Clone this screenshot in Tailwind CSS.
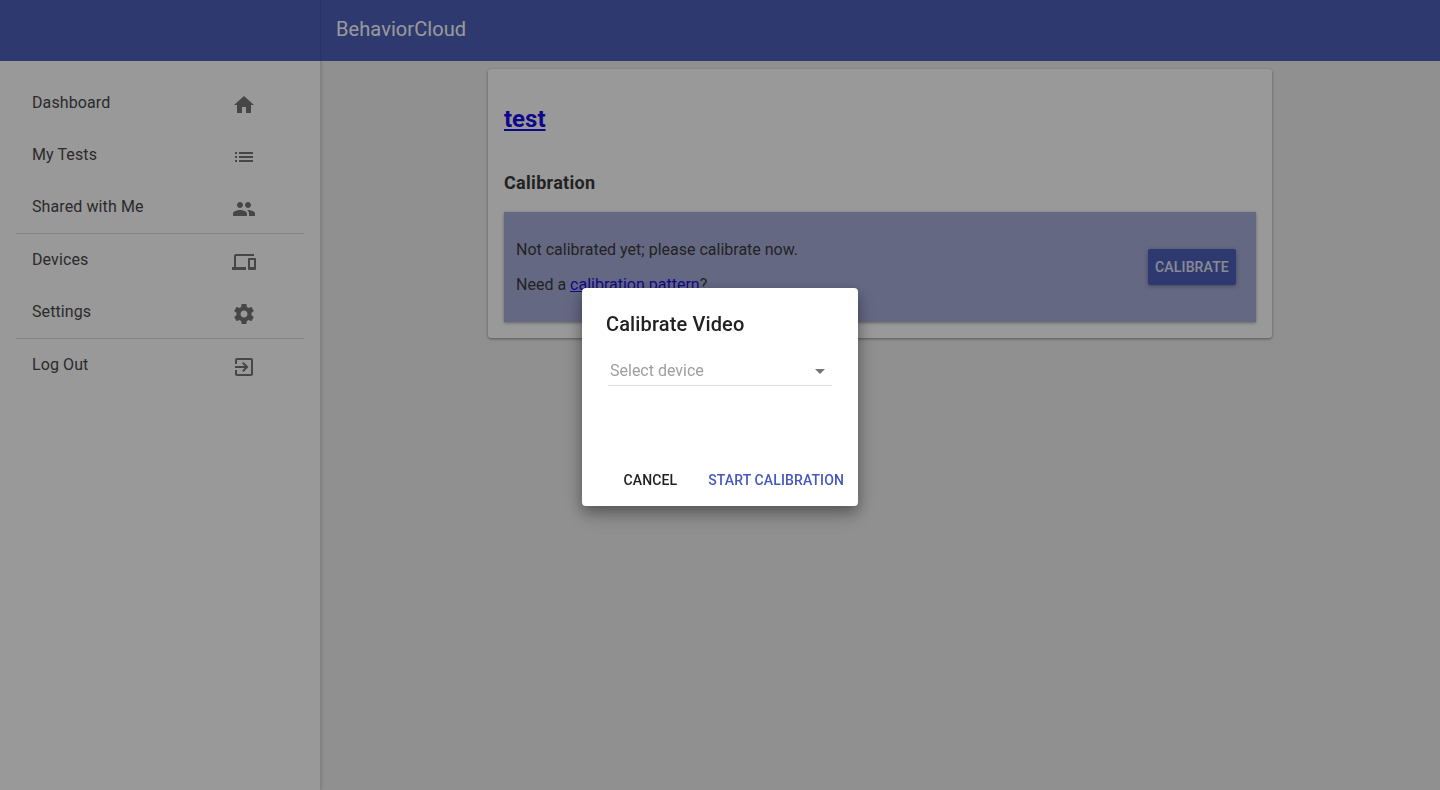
<!DOCTYPE html>
<html lang="en">
<head>
  <meta charset="UTF-8">
  <title>BehaviorCloud</title>
  <script src="https://cdn.jsdelivr.net/npm/@tailwindcss/browser@4"></script>
</head>
<body class="bg-[#f0f0f0] font-['Roboto',sans-serif] text-[#3a3a3a] overflow-hidden">
  <div class="h-[790px] flex flex-col">
    <!-- app bar -->
    <header class="h-[61px] shrink-0 bg-[#4d5fbb] flex relative z-10">
      <div class="w-[321px] border-r border-black/10"></div>
      <div class="pl-[15px] pb-1 flex items-center text-[20px] tracking-[0.08px] text-white">BehaviorCloud</div>
    </header>

    <div class="flex flex-1 min-h-0">
      <!-- sidebar -->
      <aside class="w-[321px] shrink-0 bg-white border-r border-black/15 shadow-[1px_0_3px_rgba(0,0,0,0.12)] pt-4 px-4 text-[16px] tracking-[0.1px] text-[#484848]">
        <a class="mt-1 h-12 pl-4 pr-[48px] flex items-center justify-between">
          <span class="-mt-[5px]">Dashboard</span>
          <svg class="w-6 h-6 fill-[#757575]" viewBox="0 0 24 24"><path d="M10 20v-6h4v6h5v-8h3L12 3 2 12h3v8z"/></svg>
        </a>
        <a class="mt-1 h-12 pl-4 pr-[48px] flex items-center justify-between">
          <span class="-mt-[5px]">My Tests</span>
          <svg class="w-6 h-6 fill-[#757575]" viewBox="0 0 24 24"><path d="M3 13h2v-2H3v2zm0 4h2v-2H3v2zm0-8h2V7H3v2zm4 4h14v-2H7v2zm0 4h14v-2H7v2zM7 7v2h14V7H7z"/></svg>
        </a>
        <a class="mt-1 h-12 pl-4 pr-[48px] flex items-center justify-between">
          <span class="-mt-[5px]">Shared with Me</span>
          <svg class="w-6 h-6 fill-[#757575]" viewBox="0 0 24 24"><path d="M16 11c1.66 0 2.99-1.34 2.99-3S17.66 5 16 5c-1.66 0-3 1.34-3 3s1.34 3 3 3zm-8 0c1.66 0 2.99-1.34 2.99-3S9.66 5 8 5C6.34 5 5 6.34 5 8s1.34 3 3 3zm0 2c-2.33 0-7 1.17-7 3.5V19h14v-2.5c0-2.33-4.67-3.5-7-3.5zm8 0c-.29 0-.62.02-.97.05 1.16.84 1.97 1.97 1.97 3.45V19h6v-2.5c0-2.33-4.67-3.5-7-3.5z"/></svg>
        </a>
        <div class="h-px bg-[#dedede]"></div>
        <a class="mt-1 h-12 pl-4 pr-[48px] flex items-center justify-between">
          <span class="-mt-[5px]">Devices</span>
          <svg class="w-6 h-6 fill-[#757575]" viewBox="0 0 24 24"><path d="M4 6h18V4H4c-1.1 0-2 .9-2 2v11H0v3h14v-3H4V6zm19 2h-6c-.55 0-1 .45-1 1v10c0 .55.45 1 1 1h6c.55 0 1-.45 1-1V9c0-.55-.45-1-1-1zm-1 9h-4v-7h4v7z"/></svg>
        </a>
        <a class="mt-1 h-12 pl-4 pr-[48px] flex items-center justify-between">
          <span class="-mt-[5px]">Settings</span>
          <svg class="w-6 h-6 fill-[#757575]" viewBox="0 0 24 24"><path d="M19.43 12.98c.04-.32.07-.64.07-.98s-.03-.66-.07-.98l2.11-1.65c.19-.15.24-.42.12-.64l-2-3.46c-.12-.22-.39-.3-.61-.22l-2.49 1c-.52-.4-1.08-.73-1.69-.98l-.38-2.65C14.46 2.18 14.25 2 14 2h-4c-.25 0-.46.18-.49.42l-.38 2.65c-.61.25-1.17.59-1.69.98l-2.49-1c-.23-.09-.49 0-.61.22l-2 3.46c-.13.22-.07.49.12.64l2.11 1.65c-.04.32-.07.65-.07.98s.03.66.07.98l-2.11 1.65c-.19.15-.24.42-.12.64l2 3.46c.12.22.39.3.61.22l2.49-1c.52.4 1.08.73 1.69.98l.38 2.65c.03.24.24.42.49.42h4c.25 0 .46-.18.49-.42l.38-2.65c.61-.25 1.17-.59 1.69-.98l2.49 1c.23.09.49 0 .61-.22l2-3.46c.12-.22.07-.49-.12-.64l-2.11-1.65zM12 15.5c-1.93 0-3.5-1.57-3.5-3.5s1.57-3.5 3.5-3.5 3.5 1.57 3.5 3.5-1.57 3.5-3.5 3.5z"/></svg>
        </a>
        <div class="h-px bg-[#dedede]"></div>
        <a class="mt-1 h-12 pl-4 pr-[48px] flex items-center justify-between">
          <span class="-mt-[5px]">Log Out</span>
          <svg class="w-6 h-6 fill-[#757575]" viewBox="0 0 24 24"><path d="M10.09 15.59L11.5 17l5-5-5-5-1.41 1.41L12.67 11H3v2h9.67l-2.58 2.59zM19 3H5c-1.11 0-2 .9-2 2v4h2V5h14v14H5v-4H3v4c0 1.1.89 2 2 2h14c1.1 0 2-.9 2-2V5c0-1.1-.9-2-2-2z"/></svg>
        </a>
      </aside>

      <!-- main -->
      <main class="flex-1 pt-2 pl-[167px]">
        <section class="w-[784px] h-[269px] bg-white rounded-[3px] shadow-[0_1px_3px_rgba(0,0,0,0.4)] pt-8 px-4">
          <h2 class="text-[24px] font-bold leading-9"><a class="text-[#1a0de8] underline">test</a></h2>
          <h3 class="mt-8 text-[18px] font-bold tracking-[0.3px] leading-[28px]">Calibration</h3>
          <div class="mt-[15px] h-[110px] bg-[#a8aedb] shadow-[0_1px_3px_rgba(0,0,0,0.35)] pl-3 pr-5 flex items-center justify-between">
            <div class="text-[16px]">
              <p class="leading-[22px]">Not calibrated yet; please calibrate now.</p>
              <p class="mt-[13px] leading-[22px]">Need a <a class="text-[#1a0de8] underline">calibration pattern</a>?</p>
            </div>
            <button class="w-[88px] h-9 rounded-[2px] bg-[#4d5fbb] text-white/85 text-[14px] font-medium tracking-[0.15px] shadow-[0_1px_4px_rgba(0,0,0,0.35)]">CALIBRATE</button>
          </div>
        </section>
      </main>
    </div>
  </div>

  <!-- modal overlay -->
  <div class="fixed inset-0 z-20 bg-black/40 flex items-start justify-center pt-[288px]">
    <div class="w-[276px] h-[218px] bg-white rounded-[4px] shadow-[0_5px_14px_rgba(0,0,0,0.3),0_9px_22px_rgba(0,0,0,0.2)] flex flex-col">
      <h4 class="pt-6 px-6 text-[20px] font-medium leading-6 tracking-[0.13px] text-[#212121]">Calibrate Video</h4>
      <div class="mt-4 mx-[26px] h-[34px] border-b border-[#e0e0e0] pl-[2px] pt-1 flex items-center justify-between text-[16px] text-[#9e9e9e]">
        <span>Select device</span>
        <svg class="w-6 h-6 fill-[#757575]" viewBox="0 0 24 24"><path d="M7 10l5 5 5-5z"/></svg>
      </div>
      <div class="mt-auto mb-2 pr-[14px] flex justify-end gap-[31px] text-[14px] font-medium tracking-[0.12px] h-9 items-center text-[#212121]">
        <button>CANCEL</button>
        <button class="text-[#4658be]">START CALIBRATION</button>
      </div>
    </div>
  </div>
</body>
</html>
